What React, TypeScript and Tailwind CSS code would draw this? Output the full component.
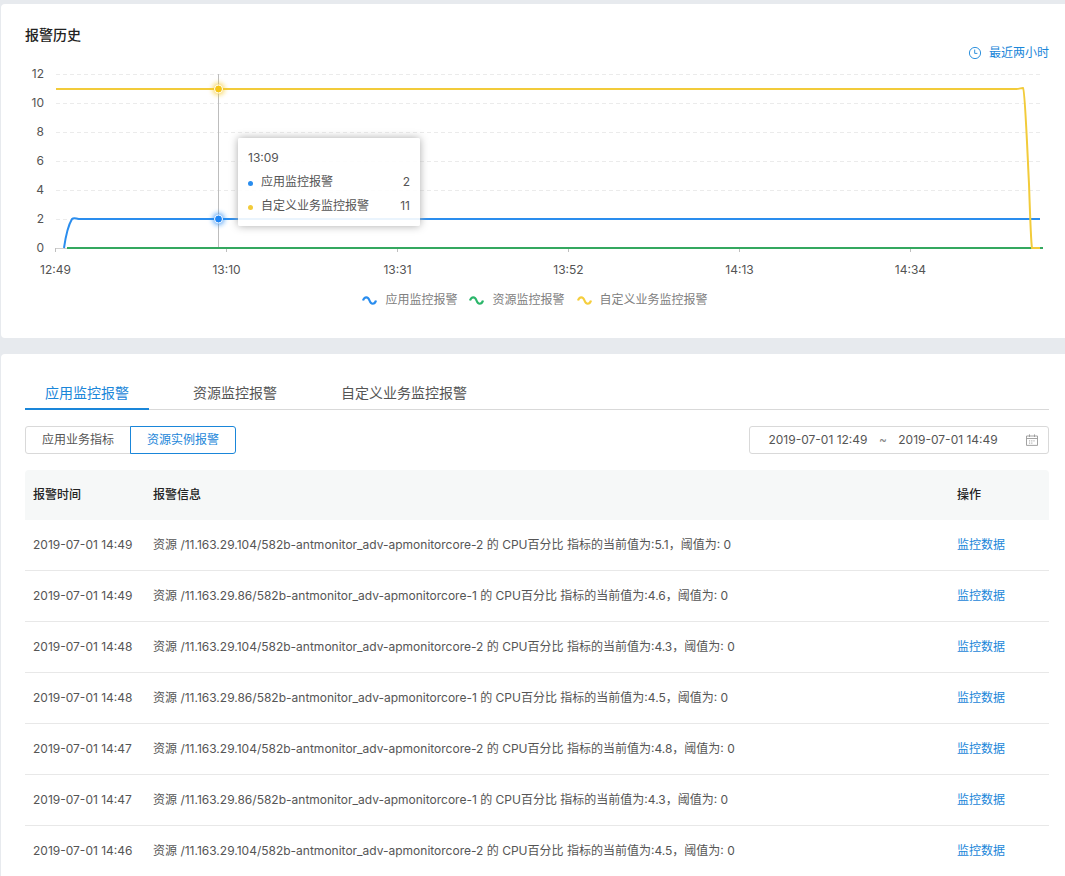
import { useState } from "react";
import clsx from "clsx";

const BLUE = '#2a8dee'
const GREEN = '#34a85f'
const YELLOW = '#f2cb3a'

const yTicks = [12, 10, 8, 6, 4, 2, 0]
const xTicks = ['12:49', '13:10', '13:31', '13:52', '14:13', '14:34']

const series = [
    { name: '应用监控报警', color: '#2a8dee' },
    { name: '资源监控报警', color: '#2bb66a' },
    { name: '自定义业务监控报警', color: '#f5ce3e' },
]

const tooltipRows = [
    { name: '应用监控报警', color: BLUE, value: 2 },
    { name: '自定义业务监控报警', color: YELLOW, value: 11 },
]

const tabs = ['应用监控报警', '资源监控报警', '自定义业务监控报警']

const alarms = [
    { time: '2019-07-01 14:49', host: '11.163.29.104', id: 2, value: '5.1' },
    { time: '2019-07-01 14:49', host: '11.163.29.86', id: 1, value: '4.6' },
    { time: '2019-07-01 14:48', host: '11.163.29.104', id: 2, value: '4.3' },
    { time: '2019-07-01 14:48', host: '11.163.29.86', id: 1, value: '4.5' },
    { time: '2019-07-01 14:47', host: '11.163.29.104', id: 2, value: '4.8' },
    { time: '2019-07-01 14:47', host: '11.163.29.86', id: 1, value: '4.3' },
    { time: '2019-07-01 14:46', host: '11.163.29.104', id: 2, value: '4.5' },
]

const ClockIcon = () => (
    <svg width="14" height="14" viewBox="0 0 14 14" fill="none" stroke="currentColor" strokeWidth="0.9">
        <circle cx="7" cy="7" r="5.6" />
        <path d="M6.7 3.6V7.4H9.4" />
    </svg>
)

const CalendarIcon = () => (
    <svg width="12" height="12" viewBox="0 0 12 12" fill="none" stroke="currentColor">
        <path d="M0.5 2H11.5V11.4H0.5ZM0.5 4.5H11.5M3.5 0.4V3M8.5 0.4V3" strokeWidth="0.9" />
        <path d="M3 6.9H9M3 9.1H7" strokeDasharray="1.2 1" strokeWidth="0.9" />
    </svg>
)

const Chart = () => {
    // value 12 is drawn at y = 10, value 0 at y = 184
    const toY = (v: number) => 184 - v * 14.5

    return (
        <svg className="block w-full" viewBox="0 0 1024 220" fill="none" role="img" aria-label="报警历史">
            <defs>
                <filter id="glow" x="-100%" y="-100%" width="300%" height="300%">
                    <feGaussianBlur stdDeviation="2.5" />
                </filter>
            </defs>
            {yTicks.map((v) => (
                <g key={v}>
                    <text x="19" y={toY(v) + 4} textAnchor="end" fontSize="12" fill="#545454">{v}</text>
                    {v > 0 && <path d={`M31 ${toY(v) + 0.5}H1018`} stroke="#ebebeb" strokeDasharray="4 3" />}
                </g>
            ))}
            <path d="M30 184.5H1018" stroke="#cfcfcf" />
            {xTicks.map((t, i) => (
                <g key={t}>
                    <path d={`M${30.5 + i * 171} 184V188`} stroke="#bfbfbf" />
                    <text x={30.5 + i * 171} y="210" textAnchor="middle" fontSize="12" fill="#545454">{t}</text>
                </g>
            ))}
            <path d="M193.5 10V184" stroke="#bdbdbd" />
            <path d="M39 184C41 170 44 160 47 155C49 153 51 155 56 155H1015" stroke={BLUE} strokeWidth="2" />
            <path d="M42 184H1018" stroke={GREEN} strokeWidth="2" />
            <path d="M31 25H990C994 25 996 24 998 24C1000 26 1002 80 1004 120C1005 150 1006 180 1007 184H1015" stroke={YELLOW} strokeWidth="2" />
            {[{ y: 25, color: '#f5c518' }, { y: 155, color: '#1f86f5' }].map((p) => (
                <g key={p.y}>
                    <circle cx="193.5" cy={p.y} r="6" fill={p.color} opacity="0.7" filter="url(#glow)" />
                    <circle cx="193.5" cy={p.y} r="4" fill={p.color} stroke="#fff" />
                </g>
            ))}
        </svg>
    )
}

const App: React.FC = () => {
    const [tab, setTab] = useState(0)
    const [kind, setKind] = useState(1)
    const [start, setStart] = useState('2019-07-01 12:49')
    const [end, setEnd] = useState('2019-07-01 14:49')

    return (
        <div className="flex flex-col gap-4 bg-[#e7eaee] pt-1 pl-px font-[Inter,'Noto_Sans_CJK_SC',sans-serif] text-xs text-[#555]">
            <section className="rounded-l bg-white pt-[21px] pr-4 pb-7 pl-6">
                <h2 className="text-sm/5 font-medium text-[#222]">报警历史</h2>
                <div className="flex h-[19px] items-start justify-end">
                    <button className="flex items-center gap-[7px] text-[#1a86d9]">
                        <ClockIcon />
                        最近两小时
                    </button>
                </div>
                <div className="relative">
                    <Chart />
                    <div className="absolute top-[74px] left-[213px] h-[88px] w-[182px] rounded-xs bg-white/90 p-[10px] pt-2 leading-6 shadow-[0_0_8px_#aaa]">
                        <div>13:09</div>
                        {tooltipRows.map((row) => (
                            <div key={row.name} className="flex items-center">
                                <span className="mt-0.5 mr-2 size-[5px] rounded-full" style={{ background: row.color }} />
                                <span className="flex-1">{row.name}</span>
                                <span>{row.value}</span>
                            </div>
                        ))}
                    </div>
                </div>
                <div className="mt-1.5 flex h-5 items-center justify-center gap-3 pr-1 text-[#808080]">
                    {series.map((s) => (
                        <button key={s.name} className="flex items-center gap-2">
                            <svg width="15" height="10" viewBox="0 0 15 10" fill="none" stroke={s.color} strokeWidth="2.2">
                                <path d="M1 5.5C2.5 1.2 6 1.2 7.5 5.5C9 9.8 12.5 9.8 14 5.5" />
                            </svg>
                            {s.name}
                        </button>
                    ))}
                </div>
            </section>

            <section className="rounded-tl bg-white pt-6 pr-4 pl-6">
                <div className="flex gap-6 text-sm" role="tablist">
                    {tabs.map((name, i) => (
                        <button
                            key={name}
                            role="tab"
                            aria-selected={tab === i}
                            onClick={() => setTab(i)}
                            className={clsx('z-10 h-8 border-b-2 px-5', tab === i ? 'border-[#1a86d9] text-[#1a86d9]' : 'border-transparent')}
                        >
                            {name}
                        </button>
                    ))}
                </div>
                <div className="-mt-px border-t border-[#d9d9d9]" />

                <div className="mt-4 flex items-center justify-between">
                    <div className="flex">
                        {['应用业务指标', '资源实例报警'].map((name, i) => (
                            <button
                                key={name}
                                onClick={() => setKind(i)}
                                className={clsx(
                                    'h-7 border px-4 first:rounded-l-[3px] last:-ml-px last:rounded-r-[3px]',
                                    kind === i ? 'z-10 border-[#1a86d9] text-[#1a86d9]' : 'border-[#d9d9d9]'
                                )}
                            >
                                {name}
                            </button>
                        ))}
                    </div>
                    <div className="flex h-7 w-[300px] items-center rounded-[3px] border border-[#d9d9d9] pr-[10px] pl-2">
                        <input aria-label="开始时间" className="w-[120px] text-center outline-none" value={start} onChange={(e) => setStart(e.target.value)} />
                        <span className="w-[10px] text-center text-[#888]">~</span>
                        <input aria-label="结束时间" className="w-[120px] text-center outline-none" value={end} onChange={(e) => setEnd(e.target.value)} />
                        <span className="ml-auto text-[#999]"><CalendarIcon /></span>
                    </div>
                </div>

                <table className="mt-4 w-full table-fixed border-separate border-spacing-0 text-left">
                    <thead>
                        <tr className="h-[50px] text-[#222] *:bg-[#f6f8f8] *:px-2 *:font-medium">
                            <th className="w-[120px] rounded-tl">报警时间</th>
                            <th>报警信息</th>
                            <th className="w-[100px] rounded-tr">操作</th>
                        </tr>
                    </thead>
                    <tbody>
                        {alarms.map((a, i) => (
                            <tr key={i} className="h-[51px] *:border-b *:border-[#e8e8e8] *:px-2">
                                <td className="whitespace-nowrap">{a.time}</td>
                                <td>
                                    资源 /{a.host}/582b-antmonitor_adv-apmonitorcore-{a.id} 的 CPU百分比 指标的当前值为:{a.value}，阈值为: 0
                                </td>
                                <td><a href="#" className="text-[#1a86d9]">监控数据</a></td>
                            </tr>
                        ))}
                    </tbody>
                </table>
            </section>
        </div>
    )
}

export default App
